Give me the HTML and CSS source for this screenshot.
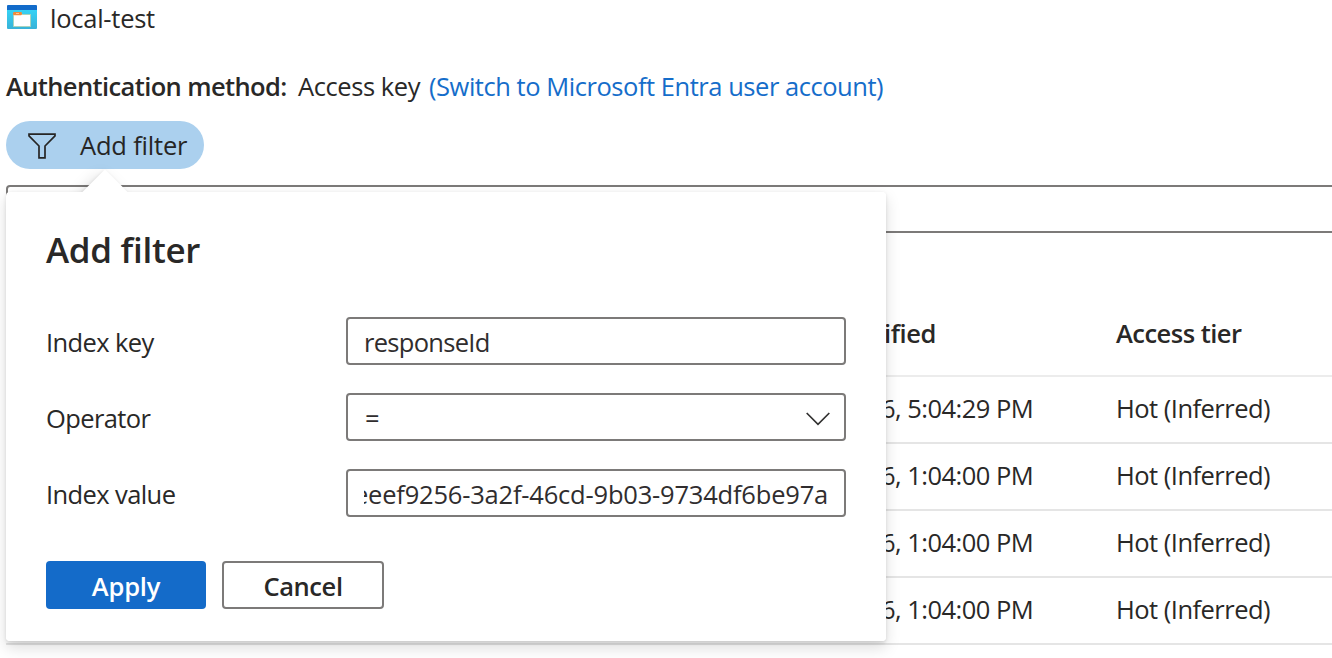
FILE: index.html
```html
<!DOCTYPE html>
<html lang="en">
<head>
<meta charset="utf-8">
<title>local-test</title>
<link rel="stylesheet" href="styles.css">
</head>
<body>
<main class="page">
  <header class="crumb">
    <svg class="crumb-icon" width="30" height="24" viewBox="0 0 30 24">
      <defs>
        <linearGradient id="sky" x1="0" y1="0" x2="0" y2="1"><stop offset="0" stop-color="#35d2f4"/><stop offset="1" stop-color="#38b2d8"/></linearGradient>
      </defs>
      <path fill="url(#sky)" d="M0 5h30v18q0 1-1 1H1q-1 0-1-1z"/>
      <path fill="#126bca" d="M1 0h28q1 0 1 1v4H0V1q0-1 1-1z"/>
      <path fill="#fff" stroke="#a9d3bd" stroke-width="1" d="M6.5 8.5h8l1 1h8v12h-17z"/>
      <rect x="6" y="7" width="9" height="3.2" rx="1.2" fill="#f08a3c"/>
      <path stroke="#ffc58a" stroke-width="1" d="M9 8.5h3"/>
    </svg>
    <span class="crumb-name">local-test</span>
  </header>
  <p class="auth"><strong class="auth-label">Authentication method:</strong><span class="auth-value">Access key</span><a class="auth-link">(Switch to Microsoft Entra user account)</a></p>
  <div class="filter-bar">
    <button class="pill">
      <svg class="funnel" width="28" height="26" viewBox="0 0 28 26" fill="none" stroke="#262524" stroke-width="1.7"><path d="M1 1.2h26v1.6L17 13v11.8h-6V13L1 2.8z"/></svg>
      <span class="pill-text">Add filter</span>
    </button>
    <section class="callout">
      <div class="beak"></div>
      <div class="callout-body">
        <h2 class="title">Add filter</h2>
        <div class="form">
          <label class="label label-key">Index key</label>
          <div class="field"><span class="value value-key">responseId</span></div>
          <label class="label label-op">Operator</label>
          <div class="field select"><span class="value value-op">=</span>
            <svg class="chevron" width="26" height="16" viewBox="0 0 26 16" fill="none" stroke="#323130" stroke-width="1.7"><path d="M1.7 2 13 13.3 24.3 2"/></svg>
          </div>
          <label class="label label-value">Index value</label>
          <div class="field"><span class="value value-id">eeef9256-3a2f-46cd-9b03-9734df6be97a</span></div>
        </div>
        <div class="actions">
          <button class="btn primary">Apply</button>
          <button class="btn secondary">Cancel</button>
        </div>
      </div>
    </section>
  </div>
  <div class="search"></div>
  <div class="table">
    <div class="row head"><span class="modified">ified</span><span class="tier">Access tier</span></div>
    <div class="row"><span class="modified">6, 5:04:29 PM</span><span class="tier">Hot (Inferred)</span></div>
    <div class="row"><span class="modified">6, 1:04:00 PM</span><span class="tier">Hot (Inferred)</span></div>
    <div class="row"><span class="modified">6, 1:04:00 PM</span><span class="tier">Hot (Inferred)</span></div>
    <div class="row"><span class="modified">6, 1:04:00 PM</span><span class="tier">Hot (Inferred)</span></div>
  </div>
</main>
</body>
</html>
```
FILE: styles.css
```css
* { box-sizing: border-box; }
body {
  margin: 0;
  background: #fff;
  color: #292827;
  font: 25.5px/34px "Open Sans", "Noto Sans", sans-serif;
}
.page { height: 658px; padding-left: 6px; overflow: hidden; }
.crumb { display: flex; height: 35px; padding: 1px 0 0 1px; }
.crumb-icon { margin: 4px 13px 0 0; }
.crumb-name { letter-spacing: -0.25px; }
.auth { display: flex; margin: 34px 0 18px; white-space: nowrap; }
.auth-label { width: 292px; font-weight: 600; letter-spacing: -0.62px; }
.auth-value { width: 131px; letter-spacing: -0.42px; }
.auth-link { color: #156dca; letter-spacing: -0.46px; }
.filter-bar { position: relative; height: 64px; }
.pill {
  display: flex;
  align-items: center;
  gap: 24px;
  width: 198px;
  height: 48px;
  padding: 0 0 0 22px;
  border: 0;
  border-radius: 24px;
  background: #abd0ee;
  color: #262524;
  font: inherit;
  letter-spacing: -0.2px;
  white-space: nowrap;
}
.funnel { margin-top: 2px; }
.callout {
  position: absolute;
  z-index: 1;
  top: 71px;
  left: 0;
  width: 880px;
  height: 449px;
  border-radius: 4px;
  box-shadow: 0 6.4px 14.4px rgba(0, 0, 0, .132), 0 1.2px 3.6px rgba(0, 0, 0, .108);
}
.beak {
  position: absolute;
  top: -16px;
  left: 83px;
  width: 32px;
  height: 32px;
  background: #fff;
  transform: rotate(45deg);
  box-shadow: 0 6.4px 14.4px rgba(0, 0, 0, .132), 0 1.2px 3.6px rgba(0, 0, 0, .108);
}
.callout-body {
  position: relative;
  height: 100%;
  padding: 34px 40px 32px;
  border-radius: 4px;
  background: #fff;
}
.title { margin: 0 0 43px; font-size: 35px; font-weight: 600; line-height: 48px; letter-spacing: -0.3px; }
.form {
  display: grid;
  grid-template-columns: 300px 500px;
  grid-auto-rows: 48px;
  row-gap: 28px;
  align-items: center;
  white-space: nowrap;
}
.label { padding-top: 2px; letter-spacing: -0.6px; }
.field {
  display: flex;
  align-items: center;
  height: 48px;
  padding: 1px 16px 0;
  border: 2px solid #7c7a79;
  border-radius: 4px;
  color: #302d2e;
}
.value-key { letter-spacing: -0.7px; }
.select { justify-content: space-between; padding-right: 13px; }
.value-op { padding-left: 1px; }
.chevron { margin-top: 2px; }
.value-id {
  display: flex;
  justify-content: flex-end;
  width: 464px;
  overflow: hidden;
  letter-spacing: -0.2px;
}
.actions { display: flex; gap: 16px; margin-top: 44px; }
.btn {
  height: 48px;
  padding: 2px 0 0;
  border-radius: 4px;
  font: inherit;
  font-weight: 600;
}
.primary { width: 160px; border: 0; background: #146bc9; color: #fff; letter-spacing: -0.2px; }
.secondary { width: 162px; border: 2px solid #7c7a79; background: #fff; color: #292827; letter-spacing: -0.4px; }
.search {
  height: 48px;
  margin-right: -10px;
  border: 2px solid #7c7a79;
  border-radius: 4px;
}
.table { margin-top: 58px; white-space: nowrap; }
.row {
  display: grid;
  grid-template-columns: 235px 1fr;
  align-items: center;
  height: 67px;
  padding: 0 0 3px 875px;
  border-bottom: 2px solid #e5e5e5;
  letter-spacing: -0.52px;
}
.head { height: 86px; padding-bottom: 1px; font-weight: 600; border-color: #ececec; }
.head .modified { padding-left: 3px; letter-spacing: -0.4px; }
```
